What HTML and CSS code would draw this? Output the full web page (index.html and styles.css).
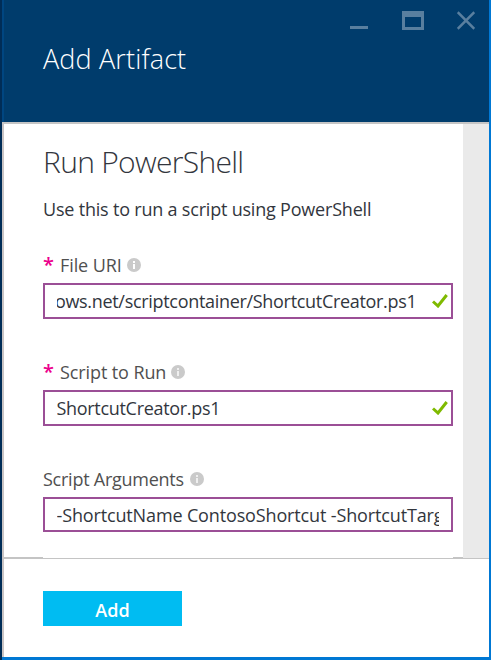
FILE: index.html
```html
<!DOCTYPE html>
<html lang="en">
<head>
<meta charset="utf-8">
<title>Add Artifact</title>
<link rel="stylesheet" href="styles.css">
</head>
<body>
<main class="blade">
  <header class="header">
    <div class="controls">
      <svg width="18" height="20" viewBox="0 0 18 20"><path d="M0 16.5h18" stroke-width="3"/></svg>
      <svg width="22" height="20" viewBox="0 0 22 20"><path d="M1.5 1.5h19v16h-19z" stroke-width="3"/><path d="M0 3h22" stroke-width="6"/></svg>
      <svg width="18" height="20" viewBox="0 0 18 20"><path d="M.7 1.2l16.6 16.6M17.3 1.2L.7 17.8" stroke-width="2.5"/></svg>
    </div>
    <h1>Add Artifact</h1>
  </header>
  <div class="body">
    <section class="content">
      <h2>Run PowerShell</h2>
      <p>Use this to run a script using PowerShell</p>
      <div class="field">
        <div class="label"><b class="star">*</b><span>File URI</span><svg class="info" viewBox="0 0 14 14"><circle cx="7" cy="7" r="7"/><path d="M6 3h2v2H6zM6 6h2v5H6z"/></svg></div>
        <div class="input"><div class="value end"><span>ows.net/scriptcontainer/ShortcutCreator.ps1</span></div><svg class="check" viewBox="0 0 16 14"><path d="M1 7.5l5 4.5L14.7 1"/></svg></div>
      </div>
      <div class="field">
        <div class="label"><b class="star">*</b><span>Script to Run</span><svg class="info" viewBox="0 0 14 14"><circle cx="7" cy="7" r="7"/><path d="M6.3 3h1.4v2H6.3zM6.3 6h1.4v5H6.3z"/></svg></div>
        <div class="input"><div class="value">ShortcutCreator.ps1</div><svg class="check" viewBox="0 0 16 14"><path d="M1 7.5l5 4.5L14.7 1"/></svg></div>
      </div>
      <div class="field">
        <div class="label"><span class="args">Script Arguments</span><svg class="info" viewBox="0 0 14 14"><circle cx="7" cy="7" r="7"/><path d="M6.3 3h1.4v2H6.3zM6.3 6h1.4v5H6.3z"/></svg></div>
        <div class="input short"><div class="value long">-ShortcutName ContosoShortcut -ShortcutTarg</div></div>
      </div>
      <div class="edge"><i class="edge-left"></i><i class="edge-right"></i></div>
    </section>
    <div class="scrollbar"></div>
  </div>
  <footer class="footer"><button class="add" type="button">Add</button></footer>
</main>
</body>
</html>
```
FILE: styles.css
```css
* { box-sizing: border-box; }
body {
  margin: 0;
  background: #002d57;
  font-family: "Open Sans", "Noto Sans", sans-serif;
  font-size: 18px;
  color: #32363d;
}
.blade {
  height: 660px;
  margin-left: 2px;
  display: flex;
  flex-direction: column;
  border-right: 2px solid #0078d4;
  border-bottom: 3px solid #0078d4;
  background: #fff;
  white-space: nowrap;
  overflow: hidden;
}
.header {
  height: 122px;
  background: #003c6c;
  border-left: 2px solid #004681;
  color: #fff;
}
.controls {
  height: 41px;
  padding: 11px 14px 0 0;
  display: flex;
  justify-content: flex-end;
  align-items: flex-start;
}
.controls svg { fill: none; stroke: #597f9f; }
.controls svg:nth-child(1) { margin-right: 1px; }
.controls svg:nth-child(2) { margin: 0 33px; }
h1, h2, p { margin: 0; }
h1 { padding-left: 39px; font-size: 27px; font-weight: 300; line-height: 36px; letter-spacing: 0.15px; }
.body {
  height: 436px;
  display: flex;
  border-top: 2px solid #c5c5c5;
  border-left: 2px solid #c9c4c4;
}
.content { width: 459px; padding: 19px 10px 0 39px; }
.scrollbar { flex: 1; background: #eaeaea; }
h2 { height: 38px; font-size: 30px; font-weight: 300; line-height: 38px; letter-spacing: -0.7px; }
p { height: 24px; margin-top: 16px; line-height: 24px; letter-spacing: -0.2px; }
.field { height: 107px; }
p + .field { margin-top: 32px; }
.label { height: 30px; display: flex; line-height: 24px; letter-spacing: -0.1px; color: #505050; }
.args { letter-spacing: -0.25px; }
.star { width: 17px; color: #ec008c; font-size: 20px; font-weight: 600; line-height: 23px; }
.info { width: 14px; height: 14px; margin: 5px 0 0 5px; }
.args + .info { margin-left: 6px; }
.info circle { fill: #cacaca; }
.info path { fill: #fff; }
.input {
  height: 36px;
  border: 2px solid #9b4f96;
  padding: 0 3px 0 11.5px;
  display: flex;
  align-items: center;
}
.short { height: 35px; }
.value { width: 382px; display: flex; overflow: hidden; line-height: 30px; letter-spacing: -0.31px; }
.long { letter-spacing: -0.14px; padding-top: 1px; }
.end { width: 360px; justify-content: flex-end; }
.value + .check { margin-left: auto; }
.check { width: 16px; height: 14px; flex: none; fill: none; stroke: #7fba00; stroke-width: 3; }
.edge { height: 1px; margin: -17px -10px 0 -39px; display: flex; justify-content: space-between; }
.edge i { background: #c4c4c4; }
.edge-left { width: 39px; }
.edge-right { width: 10px; }
.footer {
  flex: 1;
  border-top: 1px solid #c4c4c4;
  border-left: 2px solid #c9c4c4;
  padding: 32px 0 0 39px;
}
.add {
  width: 139px;
  height: 35px;
  display: block;
  border: 0;
  padding: 3px 0 0;
  background: #00bcf2;
  color: #fff;
  font: 600 18px "Open Sans", sans-serif;
}
```
